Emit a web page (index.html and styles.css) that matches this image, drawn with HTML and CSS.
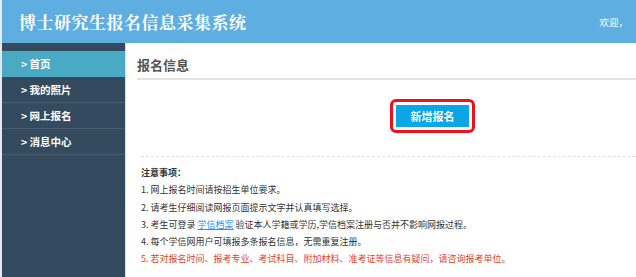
FILE: index.html
```html
<!DOCTYPE html>
<html lang="zh-CN">
<head>
    <meta charset="UTF-8">
    <title>博士研究生报名信息采集系统</title>
    <link rel="stylesheet" href="styles.css">
</head>
<body>
    <div class="page">
        <div class="header">
            <div class="logo">博士研究生报名信息采集系统</div>
            <div class="welcome">欢迎，</div>
        </div>
        <div class="main">
            <ul class="side-nav">
                <li class="active">&gt; 首页</li>
                <li>&gt; 我的照片</li>
                <li>&gt; 网上报名</li>
                <li>&gt; 消息中心</li>
            </ul>
            <div class="content">
                <h2 class="title">报名信息</h2>
                <div class="btn-row">
                    <div class="btn-mark">
                        <button type="button" class="add-button">新增报名</button>
                    </div>
                </div>
                <div class="notes">
                    <p class="notes-head">注意事项：</p>
                    <p>1. 网上报名时间请按招生单位要求。</p>
                    <p>2. 请考生仔细阅读网报页面提示文字并认真填写选择。</p>
                    <p>3. 考生可登录 <a href="#">学信档案</a> 验证本人学籍或学历,学信档案注册与否并不影响网报过程。</p>
                    <p>4. 每个学信网用户可填报多条报名信息，无需重复注册。</p>
                    <p class="warn">5. 若对报名时间、报考专业、考试科目、附加材料、准考证等信息有疑问，请咨询报考单位。</p>
                </div>
            </div>
        </div>
    </div>
</body>
</html>
```

FILE: styles.css
```css
html, body { height: 100%; }
body { margin: 0; background: #e8e8e8; font-family: "Noto Sans CJK SC", "Noto Sans", sans-serif; overflow: hidden; }
.page { margin-left: 2px; height: 100%; display: flex; flex-direction: column; background: #fff; }

.header {
    height: 43px;
    flex: none;
    background: #5eaee2;
    display: flex;
    align-items: center;
    justify-content: space-between;
    padding: 0 4px 0 17px;
}
.logo { color: #fff; font-family: "Noto Serif CJK SC", "Noto Sans CJK SC", serif; font-weight: 700; font-size: 17px; letter-spacing: 0.5px; }
.welcome { color: #fff; font-size: 9.5px; padding-right: 4px; }

.main { flex: 1; display: flex; }
.side-nav {
    list-style: none;
    margin: 0;
    padding: 8px 0 0;
    width: 123px;
    background: #344a5e;
    border-right: 1px solid #dcdcdc;
}
.side-nav li {
    height: 25px;
    line-height: 25px;
    border-bottom: 1px solid #4b5c6c;
    padding-left: 19px;
    color: #fff;
    font-size: 10.5px;
    font-weight: 700;
}
.side-nav li.active { background: #4aa9c3; border-bottom-color: #4aa9c3; }

.content { flex: 1; padding: 0 0 0 11px; }
.title {
    margin: 0;
    padding: 12px 0 3px;
    line-height: 20px;
    font-size: 13px;
    font-weight: 700;
    color: #555;
    border-bottom: 2px solid #e3e3e3;
}
.btn-row { padding: 19px 0 0 253px; }
.btn-mark {
    display: inline-block;
    border: 3px solid #ec1218;
    border-radius: 6px;
    padding: 3px;
}
.add-button {
    display: block;
    width: 73px;
    height: 22px;
    border: none;
    background: #0aa6e8;
    color: #fff;
    font-family: inherit;
    font-size: 11px;
    font-weight: 700;
    padding: 0;
}
.notes {
    margin: 23px 0 0 4px;
    border-top: 1px dashed #e0e0e0;
    padding-top: 7px;
    font-size: 9px;
    color: #333;
}
.notes p { margin: 0; line-height: 17.3px; }
.notes .notes-head { font-weight: 700; }
.notes a { color: #2b8ef0; }
.notes .warn { color: #e6431f; }
```
